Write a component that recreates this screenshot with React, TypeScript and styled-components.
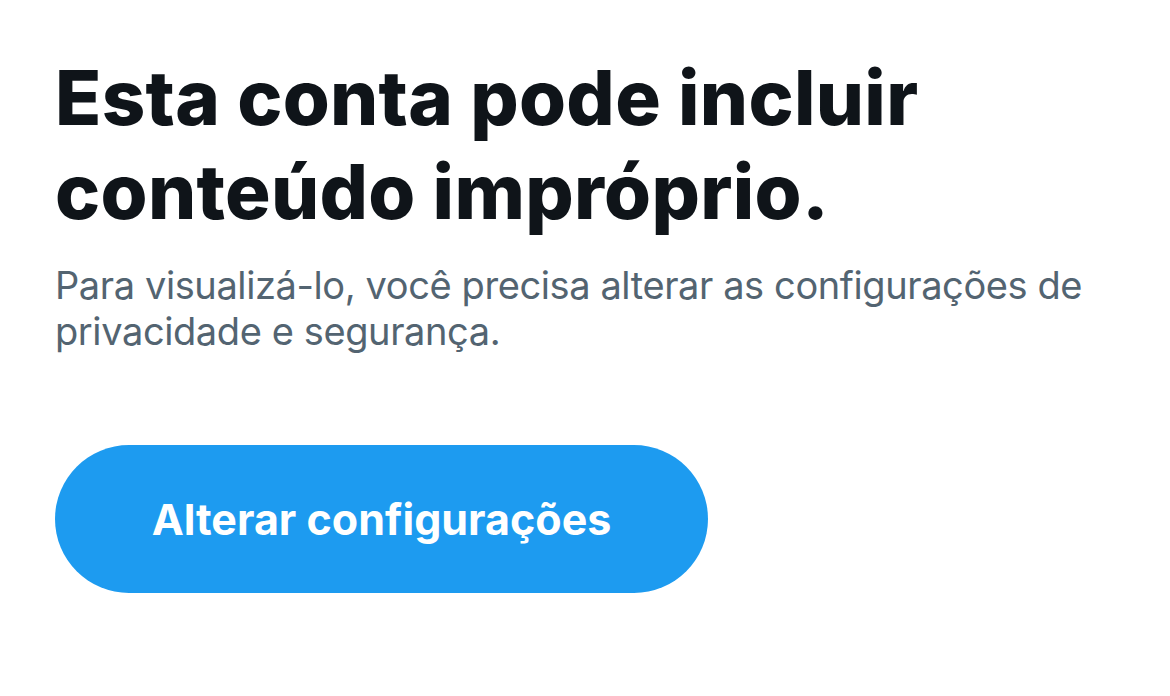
import React from "react";
import styled, { createGlobalStyle } from "styled-components";

const Global = createGlobalStyle`
  html, body { margin: 0; padding: 0; background: #ffffff; }
  body { font-family: Inter, "Noto Sans", sans-serif; -webkit-font-smoothing: antialiased; }
`;

const Page = styled.main`
  width: 1170px;
  height: 696px;
  box-sizing: border-box;
  padding: 50px 0 0 55px;
  display: flex;
  flex-direction: column;
  align-items: flex-start;
`;

const Title = styled.h1`
  margin: 0;
  font-family: Inter, sans-serif;
  font-weight: 800;
  font-size: 76px;
  line-height: 94px;
  letter-spacing: 0.3px;
  color: #0f1419;
  width: 1000px;
`;

const Subtitle = styled.p`
  margin: 24px 0 0;
  font-family: Inter, sans-serif;
  font-weight: 400;
  font-size: 38px;
  line-height: 46px;
  letter-spacing: -0.4px;
  color: #536471;
  width: 1080px;
`;

const Button = styled.button`
  margin-top: 91px;
  width: 653px;
  height: 148px;
  border: none;
  border-radius: 74px;
  background: #1d9bf0;
  color: #ffffff;
  font-family: Inter, sans-serif;
  font-weight: 700;
  font-size: 43px;
  display: flex;
  align-items: center;
  justify-content: center;
  cursor: pointer;
`;

export default function App() {
  return (
    <>
      <Global />
      <Page>
        <Title>Esta conta pode incluir conteúdo impróprio.</Title>
        <Subtitle>
          Para visualizá-lo, você precisa alterar as configurações de privacidade e segurança.
        </Subtitle>
        <Button>Alterar configurações</Button>
      </Page>
    </>
  );
}
